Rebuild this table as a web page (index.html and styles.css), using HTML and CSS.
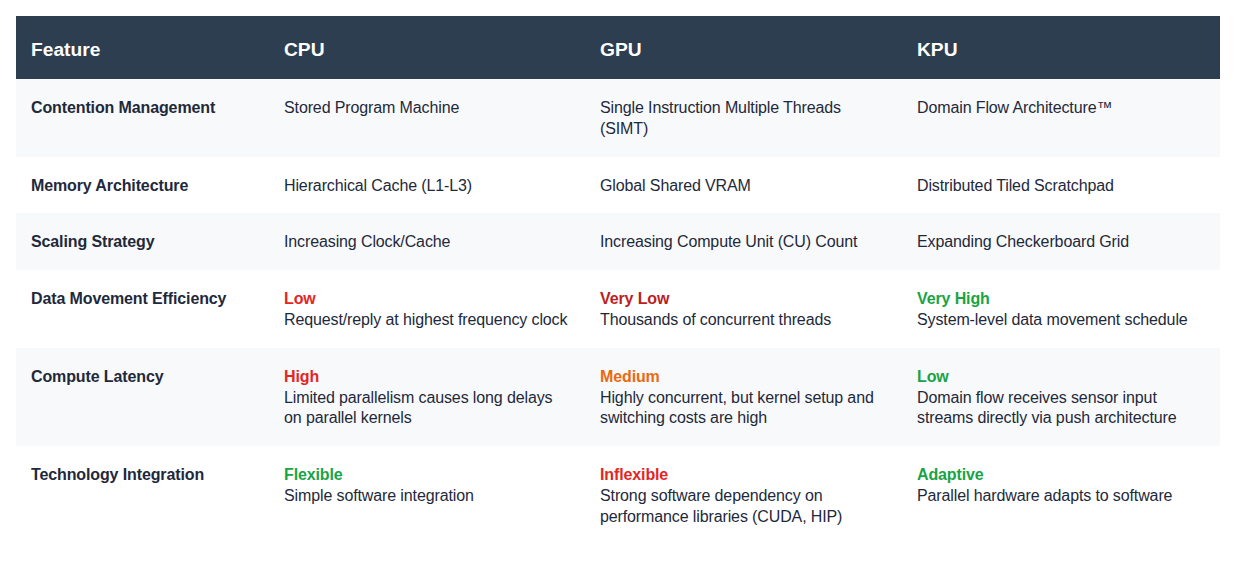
FILE: index.html
```html
<!DOCTYPE html>
<html lang="en">
<head>
<meta charset="utf-8">
<title>CPU vs GPU vs KPU</title>
<link rel="stylesheet" href="styles.css">
</head>
<body>
<table class="cmp">
  <colgroup>
    <col class="c-feat"><col class="c-cpu"><col class="c-gpu"><col class="c-kpu">
  </colgroup>
  <thead>
    <tr><th>Feature</th><th>CPU</th><th>GPU</th><th>KPU</th></tr>
  </thead>
  <tbody>
    <tr>
      <td class="label">Contention Management</td>
      <td>Stored Program Machine</td>
      <td>Single Instruction Multiple Threads (SIMT)</td>
      <td>Domain Flow Architecture™</td>
    </tr>
    <tr>
      <td class="label">Memory Architecture</td>
      <td>Hierarchical Cache (L1-L3)</td>
      <td>Global Shared VRAM</td>
      <td>Distributed Tiled Scratchpad</td>
    </tr>
    <tr>
      <td class="label">Scaling Strategy</td>
      <td>Increasing Clock/Cache</td>
      <td>Increasing Compute Unit (CU) Count</td>
      <td>Expanding Checkerboard Grid</td>
    </tr>
    <tr>
      <td class="label">Data Movement Efficiency</td>
      <td><span class="tag red">Low</span>Request/reply at highest frequency clock</td>
      <td><span class="tag dark-red">Very Low</span>Thousands of concurrent threads</td>
      <td><span class="tag green">Very High</span>System-level data movement schedule</td>
    </tr>
    <tr>
      <td class="label">Compute Latency</td>
      <td><span class="tag red">High</span>Limited parallelism causes long delays on parallel kernels</td>
      <td><span class="tag orange">Medium</span>Highly concurrent, but kernel setup and switching costs are high</td>
      <td><span class="tag green">Low</span>Domain flow receives sensor input streams directly via push architecture</td>
    </tr>
    <tr>
      <td class="label">Technology Integration</td>
      <td><span class="tag green">Flexible</span>Simple software integration</td>
      <td><span class="tag red">Inflexible</span>Strong software dependency on performance libraries (CUDA, HIP)</td>
      <td><span class="tag green">Adaptive</span>Parallel hardware adapts to software</td>
    </tr>
  </tbody>
</table>
</body>
</html>
```
FILE: styles.css
```css
html, body {
  margin: 0;
  padding: 0;
  background: #ffffff;
}
body {
  padding: 16px;
  font-family: "Liberation Sans", Arial, Helvetica, sans-serif;
  color: #1e293b;
}
.cmp {
  width: 1204px;
  border-collapse: collapse;
  table-layout: fixed;
  font-size: 16px;
  line-height: 20.8px;
  letter-spacing: -0.12px;
}
.c-feat { width: 253px; }
.c-cpu { width: 316px; }
.c-gpu { width: 317px; }
.c-kpu { width: 318px; }
.cmp thead tr {
  background: #2c3e50;
}
.cmp th {
  text-align: left;
  color: #ffffff;
  font-weight: bold;
  font-size: 19.2px;
  letter-spacing: 0;
  padding: 21px 15px 17px;
  line-height: 25px;
}
.cmp td {
  vertical-align: top;
  padding: 19px 15px 17px;
}
.cmp tbody tr:nth-child(odd) {
  background: #f8f9fa;
}
.cmp td.label {
  font-weight: bold;
}
.tag {
  display: block;
  font-weight: bold;
}
.red { color: #e3261f; }
.dark-red { color: #bd1e1e; }
.orange { color: #ea6a10; }
.green { color: #18a446; }
```
